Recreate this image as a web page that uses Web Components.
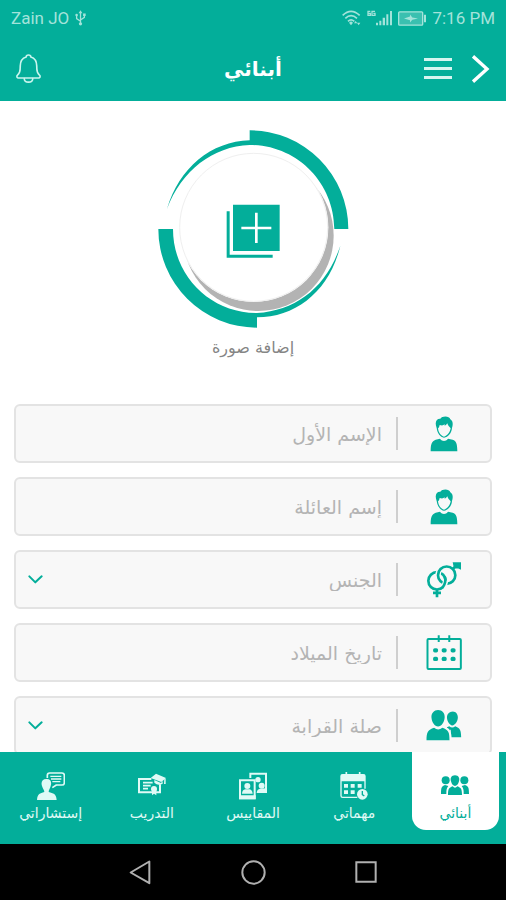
<!DOCTYPE html>
<html lang="ar" dir="rtl">
<head>
<meta charset="utf-8">
<meta name="viewport" content="width=device-width, initial-scale=1">
<title>أبنائي</title>
<style>
  :root { --teal: #03ae9a; --line: #e3e3e3; --field: #f8f8f8; --hint: #b4b4b4; }
  * { box-sizing: border-box; }
  body { margin: 0; background: #fff; font-family: "DejaVu Sans", "Noto Sans", sans-serif; }
</style>
</head>
<body>
<children-app></children-app>
<script>
const ICONS = {
  bell: ['76 88', '<g fill="none" stroke="currentColor" stroke-width="5" stroke-linejoin="round" stroke-linecap="round"><path d="M31 9C31 1 45 1 45 9C58 13 63 22 63 36C63 54 65 58 73 66Q74 73 69 73H7Q2 73 3 66C11 58 13 54 13 36C13 22 18 13 31 9Z"/><path d="M25 75C26 89 50 89 51 75"/></g>'],
  menu: ['84 63', '<path fill="currentColor" d="M0 0H84V9H0ZM0 27H84V36H0ZM0 54H84V63H0Z"/>'],
  next: ['54 84', '<path fill="none" stroke="currentColor" stroke-width="10" d="M3 4L45 42L3 80"/>'],
  usb: ['34 48', '<g fill="none" stroke="currentColor" stroke-width="4"><path d="M17 6V40M17 34L5 26V16M17 30L29 22V14"/></g><path fill="currentColor" d="M17 0L23 9H11Z"/><circle cx="17" cy="42" r="5" fill="currentColor"/><circle cx="5" cy="15" r="4" fill="currentColor"/><path fill="currentColor" d="M25 10H33V18H25Z"/>'],
  wifi: ['57 48', '<g fill="none" stroke="currentColor" stroke-width="5"><path d="M2 16Q27 -8 53 16M10 25Q27 9 45 25M18 34Q27 25 37 34"/></g><path fill="currentColor" d="M21 38L27 34L33 38L27 46ZM36 40L41 33L46 40ZM45 38H55L50 46Z"/>'],
  signal: ['75 48', '<path fill="currentColor" d="M27 38H33V46H27ZM37 32H43V46H37ZM47 23H54V46H47ZM58 13H64V46H58ZM69 3H75V46H69Z"/><path fill="none" stroke="currentColor" stroke-width="4" d="M10 4H3V16H10V10H4M24 4H15V16H24V10H19"/>'],
  battery: ['84 44', '<rect x="2" y="2" width="72" height="40" rx="3" fill="currentColor" fill-opacity=".35" stroke="currentColor" stroke-width="4"/><path fill="currentColor" d="M78 11H84V33H78ZM18 22L36 16V10L43 19L60 22L43 26L36 34V27Z"/>'],
  person: ['84 108', '<path fill="currentColor" d="M20 36C13 18 20 7 31 8C36 0 58 -1 61 10C70 15 69 27 66 36C65 51 54 64 42 65C31 64 22 52 20 36ZM2 106C2 84 5 76 17 71L30 68C37 77 47 77 54 68L68 71C79 75 82 84 82 106Z"/><path fill="var(--field)" d="M24 37C27 36 28 31 29 27C35 29 40 29 44 25V29Q49 27 52 22C54 31 59 32 62 37C60 50 51 60 42 62C33 60 25 50 24 37Z"/>'],
  gender: ['108 110', '<g fill="none" stroke="currentColor" stroke-width="8"><circle cx="33" cy="59" r="26"/><path d="M33 85V108M21 95H45"/><circle cx="62" cy="42" r="26" stroke="var(--field)" stroke-width="16" stroke-dasharray="42 200" transform="rotate(175 62 42)"/><circle cx="62" cy="42" r="26"/><path d="M80 24L90 14"/><path d="M59 58Q58 70 51 77" stroke="var(--field)" stroke-width="16"/><path d="M56 47Q62 63 50 79"/></g><path fill="currentColor" d="M80 3H105V26L97 22H84Z"/>'],
  calendar: ['108 106', '<g fill="none" stroke="currentColor" stroke-width="6"><rect x="4" y="12" width="101" height="91" rx="3"/><path d="M38 1V21M70 1V21"/></g><g fill="currentColor"><rect x="21" y="40" width="15" height="13" rx="5"/><rect x="47" y="40" width="15" height="13" rx="5"/><rect x="74" y="40" width="15" height="13" rx="5"/><rect x="21" y="66" width="15" height="13" rx="5"/><rect x="47" y="66" width="15" height="13" rx="5"/><rect x="74" y="66" width="15" height="13" rx="5"/></g>'],
  couple: ['108 94', '<g fill="currentColor"><path d="M36 0C49 0 57 10 56 23C55 38 46 50 36 50C26 50 17 38 16 23C15 10 24 0 36 0Z"/><path d="M1 92C1 67 5 61 24 54Q36 65 49 54C67 60 71 67 71 92Z"/><path d="M79 5C90 4 96 13 96 23C96 34 88 46 79 47C71 46 63 34 63 23C63 13 69 5 79 5ZM63 52L70 49Q79 57 88 49C102 54 106 60 106 83H77C76 66 72 58 63 54Z"/></g><path d="M73 60V92" stroke="var(--field)" stroke-width="3"/>'],
  down: ['45 27', '<path fill="none" stroke="currentColor" stroke-width="6" stroke-linecap="round" stroke-linejoin="round" d="M4 4L22 22L41 4"/>'],
  family: ['84 84', '<g fill="currentColor"><circle cx="14" cy="25" r="12"/><circle cx="70" cy="25" r="12"/><path d="M42 10C53 10 57 19 54 28C52 37 47 42 42 42C37 42 32 37 30 28C27 19 31 10 42 10ZM21 69C21 50 24 48 35 43Q42 51 49 43C60 48 63 50 63 69ZM0 66C0 46 2 43 12 39L22 42Q15 50 16 66ZM84 66C84 46 82 43 72 39L62 42Q69 50 68 66Z"/></g>'],
  tasks: ['84 84', '<path fill="none" stroke="currentColor" stroke-width="4" d="M52 76H8Q3 76 3 71V12Q3 8 8 8H70Q75 8 75 12V50"/><path fill="currentColor" d="M3 8H75V28H3ZM12 36H24V47H12ZM32 36H44V47H32ZM53 36H65V47H53ZM12 55H24V66H12ZM32 55H44V66H32Z"/><path stroke="currentColor" stroke-width="5" d="M19 0V14M59 0V14"/><circle cx="67" cy="67" r="16" fill="currentColor"/><path fill="none" stroke="#03ae9a" stroke-width="4" d="M67 57V68L73 72"/>'],
  measures: ['84 84', '<g fill="none" stroke="currentColor" stroke-width="6"><path d="M34 18V5H81V60H58"/><path d="M3 25H47V79H3Z"/></g><g fill="currentColor"><circle cx="25" cy="42" r="9"/><path d="M9 65Q10 53 19 52H32Q40 54 41 65ZM0 70H50V82H0Z"/><circle cx="57" cy="23" r="8"/><circle cx="68" cy="41" r="9"/><path d="M53 63Q54 51 63 50L81 49V63Z"/></g>'],
  training: ['84 84', '<path fill="none" stroke="currentColor" stroke-width="6" d="M40 21H3V61H66V37"/><g fill="currentColor"><path d="M38 18L54 5L84 18L70 30Z"/><path d="M49 24L69 33L74 27V35Q60 42 49 32ZM79 20H83V36H78Z"/><circle cx="48" cy="51" r="9"/><path d="M42 55H55V70L48 65L42 70Z"/></g><path stroke="currentColor" stroke-width="5" d="M15 32H44M15 41H38M15 50H30"/>'],
  consult: ['84 84', '<path fill="none" stroke="currentColor" stroke-width="5" stroke-linejoin="round" d="M31 18V10Q31 3 38 3H75Q82 3 82 10V32Q82 39 75 39H58L46 47"/><path stroke="currentColor" stroke-width="4" d="M40 13H73M42 21H73M46 29H70"/><path fill="currentColor" d="M28 21C41 20 45 30 41 42C39 51 35 53 35 60C49 65 58 64 59 85H0C1 64 9 65 22 60C22 53 17 51 15 42C11 30 16 21 28 21Z"/>'],
  back: ['66 74', '<path fill="none" stroke="currentColor" stroke-width="6" stroke-linejoin="round" d="M61 4V69L5 37Z"/>'],
  home: ['76 76', '<circle cx="38" cy="38" r="34" fill="none" stroke="currentColor" stroke-width="6"/>'],
  recent: ['66 66', '<path fill="none" stroke="currentColor" stroke-width="6" d="M4 4H62V62H4Z"/>'],
  photo: ['573 594', '<g transform="translate(-25 -28)"><g fill="#03ae9a"><path d="M300 29A296 296 0 0 1 596 325H554C553 184 440 73 300 73C190 77 95 150 52 265C88 142 185 62 300 59Z"/><path d="M322 621A296 296 0 0 1 26 325H70C70 466 182 577 322 577C440 570 530 500 572 375C540 510 440 590 322 590Z"/></g><circle cx="326" cy="345" r="226" fill="#b3b3b3"/><circle cx="312" cy="320" r="224" fill="#fff"/><circle cx="312" cy="320" r="222" fill="#fff" stroke="#efefef" stroke-width="3"/><path fill="#03ae9a" d="M250 252H390V391H250ZM231 272H240V402H369V411H231Z"/><path d="M275 322H365M320 276V367" stroke="#fff" stroke-width="8"/></g>']
};

class UiIcon extends HTMLElement {
  connectedCallback() {
    if (this.shadowRoot) return;
    const [box, art] = ICONS[this.getAttribute('name')];
    const [w, h] = box.split(' ').map(Number);
    this.attachShadow({ mode: 'open' }).innerHTML = `
      <style>:host{display:block;flex:none;line-height:0}svg{display:block}</style>
      <svg width="${Math.round(w / 3)}" height="${Math.round(h / 3)}" viewBox="0 0 ${box}" aria-hidden="true">${art}</svg>`;
  }
}
customElements.define('ui-icon', UiIcon);

function define(name, render) {
  customElements.define(name, class extends HTMLElement {
    connectedCallback() {
      if (this.shadowRoot) return;
      this.attachShadow({ mode: 'open' }).innerHTML = '<style>*{box-sizing:border-box}</style>' + render(this);
    }
  });
}

define('status-bar', () => `
  <style>
    :host{display:flex;direction:ltr;align-items:center;justify-content:space-between;height:36px;padding:0 11px;color:#a3e3da;font:17px Roboto,sans-serif}
    div{display:flex;align-items:center;gap:6px}
  </style>
  <div><span>Zain JO</span><ui-icon name="usb"></ui-icon></div>
  <div><ui-icon name="wifi"></ui-icon><ui-icon name="signal"></ui-icon><ui-icon name="battery"></ui-icon><span>7:16 PM</span></div>`);

define('app-bar', () => `
  <style>
    :host{display:grid;grid-template-columns:1fr auto 1fr;align-items:center;height:65px;padding:0 16px;color:#fff}
    h1{margin:0;font-size:20px;line-height:32px;font-weight:700}
    div{display:flex;align-items:center;gap:20px}
    .end{justify-content:flex-end;color:#c9f5ee}
    .menu{color:#d5f5f0}
    button{border:0;padding:0;background:none;color:inherit}
  </style>
  <div><button aria-label="رجوع"><ui-icon name="next"></ui-icon></button><button class="menu" aria-label="القائمة"><ui-icon name="menu"></ui-icon></button></div>
  <h1><slot></slot></h1>
  <div class="end"><button aria-label="الإشعارات"><ui-icon name="bell"></ui-icon></button></div>`);

define('photo-picker', () => `
  <style>
    :host{display:flex;justify-content:center}
    button{display:flex;flex-direction:column;align-items:center;gap:6px;border:0;padding:0;background:none;color:#858585;font:16px/28px "DejaVu Sans",sans-serif}
  </style>
  <button><ui-icon name="photo"></ui-icon><span><slot></slot></span></button>`);

define('form-field', el => {
  const label = el.getAttribute('label');
  const control = el.hasAttribute('choice')
    ? `<select id="c" aria-label="${label}"><option>${label}</option></select><ui-icon class="down" name="down"></ui-icon>`
    : `<input id="c" type="text" aria-label="${label}" placeholder="${label}">`;
  return `
  <style>
    :host{display:flex;align-items:center;height:59px;flex:none;border:2px solid var(--line);border-radius:6px;background:var(--field);color:var(--hint)}
    label{flex:none;display:flex;justify-content:center;width:92px;color:var(--teal)}
    .box{flex:1;min-width:0;display:flex;align-items:center;height:33px;border-right:2px solid #cfcfcf;padding:0 14px 0 12px}
    input,select{appearance:none;flex:1;min-width:0;height:33px;border:0;padding:0;margin:0;background:none;outline:0;color:inherit;font:19px "DejaVu Sans",sans-serif}
    input::placeholder{color:inherit;opacity:1}
    .down{color:var(--teal)}
  </style>
  <label for="c"><ui-icon name="${el.getAttribute('icon')}"></ui-icon></label>
  <div class="box">${control}</div>`;
});

define('nav-tab', el => `
  <style>
    :host{display:block;min-width:0}
    a{display:flex;flex-direction:column;align-items:center;gap:2px;height:78px;margin:0 7px;padding-top:20px;color:#e0faf6;text-decoration:none;white-space:nowrap;font-size:14px;line-height:22px}
    :host([active]) a{background:#fff;color:var(--teal);border-radius:0 0 14px 14px}
  </style>
  <a href="#${el.getAttribute('icon')}"><ui-icon name="${el.getAttribute('icon')}"></ui-icon><span><slot></slot></span></a>`);

define('tab-bar', () => `
  <style>:host{display:block;background:var(--teal)}nav{display:grid;grid-template-columns:repeat(5,minmax(0,1fr));height:92px}</style>
  <nav><slot></slot></nav>`);

define('system-bar', () => `
  <style>
    :host{display:flex;direction:ltr;justify-content:center;align-items:center;gap:88px;height:56px;background:#000;color:#b0b0b0}
    button{display:flex;justify-content:center;width:25px;border:0;padding:0;background:none;color:inherit}
  </style>
  <button aria-label="Back"><ui-icon name="back"></ui-icon></button>
  <button aria-label="Home"><ui-icon name="home"></ui-icon></button>
  <button aria-label="Recent"><ui-icon name="recent"></ui-icon></button>`);

define('children-app', () => `
  <style>
    :host{display:flex;flex-direction:column;height:100vh}
    header{flex:none;background:var(--teal)}
    main{flex:1;min-height:0;overflow-y:auto;scrollbar-width:none;padding:29px 14px 0}
    form{display:flex;flex-direction:column;gap:14px;margin-top:42px;padding-bottom:14px}
    tab-bar,system-bar{flex:none}
  </style>
  <header><status-bar></status-bar><app-bar>أبنائي</app-bar></header>
  <main>
    <photo-picker>إضافة صورة</photo-picker>
    <form>
      <form-field icon="person" label="الإسم الأول"></form-field>
      <form-field icon="person" label="إسم العائلة"></form-field>
      <form-field icon="gender" label="الجنس" choice></form-field>
      <form-field icon="calendar" label="تاريخ الميلاد"></form-field>
      <form-field icon="couple" label="صلة القرابة" choice></form-field>
    </form>
  </main>
  <tab-bar>
    <nav-tab icon="family" active>أبنائي</nav-tab>
    <nav-tab icon="tasks">مهماتي</nav-tab>
    <nav-tab icon="measures">المقاييس</nav-tab>
    <nav-tab icon="training">التدريب</nav-tab>
    <nav-tab icon="consult">إستشاراتي</nav-tab>
  </tab-bar>
  <system-bar></system-bar>`);
</script>
</body>
</html>
